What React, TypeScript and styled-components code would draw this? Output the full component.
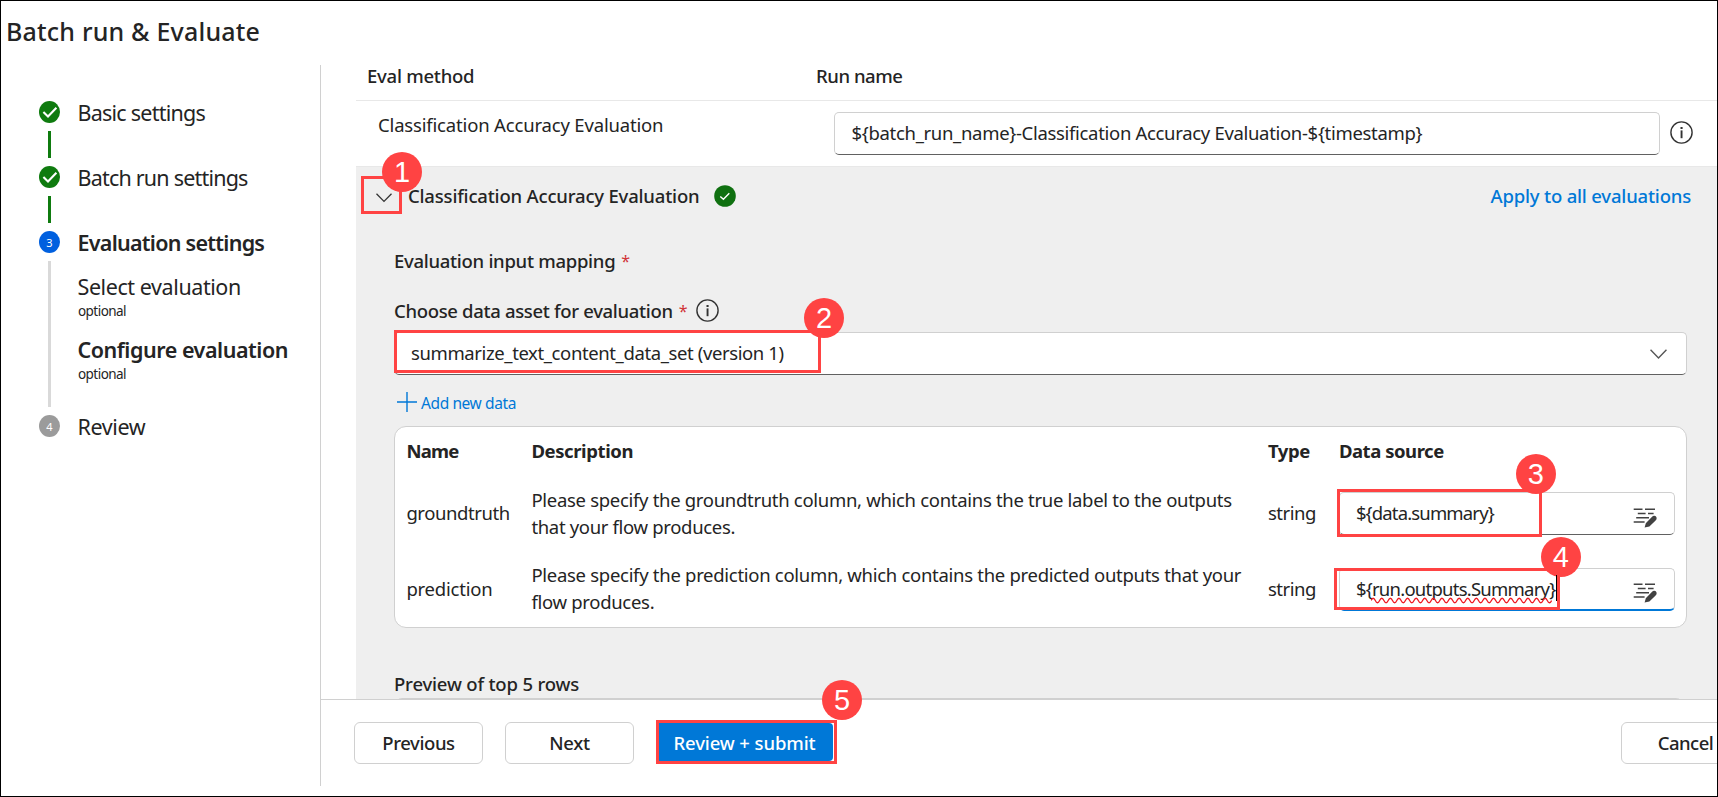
import React from "react";
import styled, { createGlobalStyle, css } from "styled-components";

const color = {
  ink: "#242424",
  blue: "#0078d7",
  green: "#0f7b0f",
  red: "#ff4343",
  line: "#d0d0d0",
  faint: "#e8e8e8",
  panel: "#efefef",
};

const GlobalStyle = createGlobalStyle`
  * { box-sizing: border-box; }
  body {
    margin: 0;
    background: #fff;
    color: ${color.ink};
    font-family: "Noto Sans", "Open Sans", sans-serif;
  }
`;

type TextProps = { $track?: number };

const BodyText = styled.div<TextProps>`
  font-size: 18.5px;
  line-height: 28px;
  white-space: nowrap;
  letter-spacing: ${(p) => p.$track ?? -0.3}px;
`;

const MediumText = styled(BodyText)`
  font-weight: 500;
`;

const BoldText = styled(BodyText)`
  font-weight: 700;
`;

/* ---------- frame ---------- */

const Frame = styled.div`
  width: 1718px;
  height: 797px;
  border: 1px solid #000;
  background: #fff;
  overflow: hidden;
  display: flex;
  flex-direction: column;
`;

const Title = styled.h1<TextProps>`
  margin: 0;
  height: 64px;
  padding: 12px 0 0 5px;
  font-size: 25px;
  font-weight: 500;
  line-height: 36px;
  letter-spacing: ${(p) => p.$track}px;
`;

const Columns = styled.div`
  height: 721px;
  display: flex;
`;

/* ---------- step list ---------- */

const Sidebar = styled.nav`
  width: 319px;
  flex: none;
  padding: 36px 0 0 38px;
  display: flex;
  flex-direction: column;
`;

const Step = styled.div<{ $height: number }>`
  height: ${(p) => p.$height}px;
  display: grid;
  grid-template-columns: 21px 1fr;
  column-gap: 17px;
`;

const Rail = styled.div`
  display: flex;
  flex-direction: column;
  align-items: center;
`;

const StepDot = styled.div<{ $color: string }>`
  width: 21px;
  height: 22px;
  flex: none;
  border-radius: 50%;
  background: ${(p) => p.$color};
  color: #fff;
  font-size: 11px;
  line-height: 24px;
  text-align: center;
`;

const Connector = styled.div<{ $color: string }>`
  width: 3px;
  flex: 1;
  margin: 8px 0;
  background: ${(p) => p.$color};
`;

const StepLabels = styled.div`
  display: flex;
  flex-direction: column;
  padding-left: 0.5px;
`;

const StepLabel = styled.div<TextProps & { $active?: boolean; $gap?: number }>`
  margin-top: ${(p) => p.$gap ?? -1}px;
  font-size: 21.5px;
  line-height: 26px;
  font-weight: ${(p) => (p.$active ? 600 : 400)};
  letter-spacing: ${(p) => p.$track}px;
  white-space: nowrap;
`;

const StepNote = styled.div`
  padding: 1px 0 0 0.5px;
  font-size: 13.5px;
  line-height: 20px;
  letter-spacing: -0.55px;
`;

/* ---------- main area ---------- */

const Main = styled.main`
  flex: 1;
  min-width: 0;
  border-left: 1px solid ${color.line};
  display: flex;
  flex-direction: column;
`;

const ScrollArea = styled.section`
  height: 642px;
  flex: none;
  overflow: hidden;
  margin-top: -8px;
  padding: 8px 0 0 35px;
`;

const methodColumns = css`
  display: grid;
  grid-template-columns: 442px 1fr;
`;

const MethodHead = styled.div`
  ${methodColumns}
  height: 36px;
  border-bottom: 1px solid ${color.faint};
`;

const HeadCell = styled(MediumText)<{ $inset: number }>`
  padding-left: ${(p) => p.$inset}px;
  line-height: 22px;
`;

const MethodRow = styled.div`
  ${methodColumns}
  height: 65px;
`;

const MethodName = styled(BodyText)`
  padding: 10px 0 0 22px;
`;

const RunName = styled.div`
  display: flex;
  align-items: flex-start;
  padding: 11px 0 0 36px;
`;

const RunInfo = styled.span`
  margin: 9px 0 0 10px;
  line-height: 0;
`;

const Field = styled.div<{ $width: number; $inset: number; $focused?: boolean }>`
  position: relative;
  width: ${(p) => p.$width}px;
  height: 43px;
  flex: none;
  padding: 0 0 0 ${(p) => p.$inset}px;
  border: 1px solid ${color.line};
  border-bottom: ${(p) => (p.$focused ? `2px solid ${color.blue}` : "1px solid #616161")};
  border-radius: 5px;
  background: #fff;
  display: flex;
  align-items: flex-start;
  justify-content: space-between;
`;

const FieldText = styled(BodyText)<{ $top: number }>`
  position: relative;
  margin-top: ${(p) => p.$top}px;
`;

const FieldIcon = styled.span<{ $top: number; $right: number }>`
  margin: ${(p) => p.$top}px ${(p) => p.$right}px 0 0;
  line-height: 0;
`;

const Panel = styled.section`
  height: 534px;
  border-top: 1px solid ${color.faint};
  background: ${color.panel};
`;

const PanelHead = styled.header`
  height: 80px;
  padding: 15px 26px 0 20px;
  display: flex;
  align-items: flex-start;
`;

const Toggle = styled.span`
  margin: 11px 16px 0 0;
  line-height: 0;
`;

const Valid = styled.span`
  margin: 3px 0 0 15px;
  line-height: 0;
`;

const ApplyLink = styled(MediumText)`
  margin-left: auto;
  color: ${color.blue};
`;

const PanelBody = styled.div`
  width: 1293px;
  margin-left: 38px;
  display: flex;
  flex-direction: column;
`;

const FieldLabel = styled.div<{ $height: number }>`
  height: ${(p) => p.$height}px;
  display: flex;
  align-items: flex-start;
`;

const Star = styled.span`
  margin-left: 6px;
  color: #d13438;
  font-size: 16px;
  line-height: 28px;
`;

const LabelInfo = styled.span`
  margin: 2px 0 0 8px;
  line-height: 0;
`;

const AddData = styled.div`
  height: 51px;
  padding: 17px 0 0 3px;
  display: flex;
  align-items: flex-start;
  gap: 4px;
  color: ${color.blue};
`;

const AddDataText = styled.span<TextProps>`
  font-size: 15.5px;
  line-height: 22px;
  letter-spacing: ${(p) => p.$track}px;
`;

const Card = styled.div`
  height: 202px;
  border: 1px solid ${color.line};
  border-radius: 12px;
  background: #fff;
`;

const inputColumns = css`
  display: grid;
  grid-template-columns: 125px 736.5px 71px 1fr;
  padding-left: 11.4px;
`;

const CardHead = styled.div`
  ${inputColumns}
  height: 48px;
  padding-top: 10px;
`;

const InputRow = styled.div<{ $height: number }>`
  ${inputColumns}
  height: ${(p) => p.$height}px;
  align-items: center;
`;

const Cell = styled(BodyText)`
  padding-bottom: 2px;
`;

const Description = styled.div<{ $lift?: number }>`
  padding-bottom: ${(p) => p.$lift ?? 2}px;
`;

const DescriptionLine = styled(BodyText)`
  line-height: 27px;
`;

const PreviewTitle = styled(MediumText)`
  margin-top: 42px;
`;

const PreviewTable = styled.div`
  width: 1290px;
  height: 20px;
  flex: none;
  border: 1px solid ${color.line};
  border-radius: 8px;
  background: #fff;
`;

/* ---------- footer ---------- */

const Footer = styled.footer`
  flex: 1;
  border-top: 1px solid ${color.line};
  padding: 20px 0 0 33px;
  display: flex;
  align-items: flex-start;
`;

const Button = styled.button<{ $width: number; $gap?: number; $end?: boolean } & TextProps>`
  width: ${(p) => p.$width}px;
  height: 42px;
  flex: none;
  margin: 2px ${(p) => (p.$end ? "-33px" : "0")} 0 ${(p) => (p.$end ? "auto" : `${p.$gap ?? 0}px`)};
  padding: 0;
  border: 1px solid ${color.line};
  border-radius: 6px;
  background: #fff;
  color: ${color.ink};
  font: 500 18.5px/28px "Noto Sans", sans-serif;
  letter-spacing: ${(p) => p.$track}px;
`;

const SubmitBox = styled.div`
  position: relative;
  width: 181px;
  height: 44px;
  margin-left: 22px;
  border: 3px solid ${color.red};
`;

const SubmitButton = styled.button<TextProps>`
  width: 174px;
  height: 38px;
  padding: 1px 3px 0 0;
  display: block;
  border: 0;
  border-radius: 0 4px 4px 0;
  background: ${color.blue};
  color: #fff;
  font: 500 18.5px/28px "Noto Sans", sans-serif;
  letter-spacing: ${(p) => p.$track}px;
`;

/* ---------- callouts drawn over the form ---------- */

const Anchor = styled.div`
  position: relative;
  width: 0;
  height: 0;
`;

const Highlight = styled.div<{ $x: number; $y: number; $w: number; $h: number }>`
  position: absolute;
  z-index: 2;
  left: ${(p) => p.$x}px;
  top: ${(p) => p.$y}px;
  width: ${(p) => p.$w}px;
  height: ${(p) => p.$h}px;
  border: 3px solid ${color.red};
`;

const Badge = styled.div<{ $x: number; $y: number }>`
  position: absolute;
  z-index: 3;
  left: ${(p) => p.$x - 20}px;
  top: ${(p) => p.$y - 20}px;
  width: 40px;
  height: 40px;
  border-radius: 50%;
  background: ${color.red};
  color: #fff;
  font: 29px/41px "Liberation Sans", sans-serif;
  text-align: center;
`;

const Squiggle = styled.svg`
  position: absolute;
  left: 15px;
  top: 22px;
`;

const Caret = styled.div`
  position: absolute;
  z-index: 3;
  right: -1px;
  top: 0;
  width: 1px;
  height: 26px;
  background: #000;
`;

/* ---------- icons ---------- */

const StepCheck = () => (
  <svg width="21" height="22" viewBox="0 0 21 22">
    <ellipse cx="10.5" cy="11" rx="10.5" ry="11" fill={color.green} />
    <path d="M4.4 11 L9 15.4 L17.4 6.8" fill="none" stroke="#fff" strokeWidth="2.1" />
  </svg>
);

const ValidIcon = () => (
  <svg width="22" height="22" viewBox="0 0 22 22">
    <circle cx="11" cy="11" r="10.8" fill="#0f7010" />
    <path d="M6.3 11.4 L9.4 14.3 L15.3 8.2" fill="none" stroke="#fff" strokeWidth="1.4" />
  </svg>
);

const InfoIcon = () => (
  <svg width="23" height="23" viewBox="0 0 23 23">
    <circle cx="11.5" cy="11.5" r="10.6" fill="none" stroke="#333" strokeWidth="1.4" />
    <rect x="10.6" y="9.4" width="1.9" height="7.8" fill="#333" />
    <rect x="10.5" y="6" width="2.1" height="2" fill="#333" />
  </svg>
);

const Chevron = ({ width = 16, tone = "#333" }: { width?: number; tone?: string }) => (
  <svg width={width} height={width * 0.6} viewBox="0 0 16 9.6">
    <path d="M0.5 0.8 L8 8.4 L15.5 0.8" fill="none" stroke={tone} strokeWidth="1.3" />
  </svg>
);

const PlusIcon = () => (
  <svg width="20" height="20" viewBox="0 0 20 20">
    <path d="M10 0 V20 M0 10 H20" stroke={color.blue} strokeWidth="1.4" />
  </svg>
);

const EditLinesIcon = () => (
  <svg width="24" height="20" viewBox="0 0 24 20">
    <path
      d="M0.7 1.3 H9.5 M12 1.3 H22 M4.8 5.5 H12.6 M15 5.5 H20.6 M3.2 9.8 H16 M0.7 14 H11.6"
      stroke="#424242"
      strokeWidth="1.4"
    />
    <path d="M11.6 19.4 L12.8 15.2 L18.6 9.2 Q20.7 7 22.8 8.2 Q24.6 10.2 22.6 12.6 L16.4 18.4 Z" fill="#424242" />
  </svg>
);

const waves = Array.from({ length: 21 }, () => "q2.15 -4.5 4.3 0 t4.3 0").join(" ");

const SpellingMark = () => (
  <Squiggle width="181" height="7" viewBox="0 0 181 7">
    <path d={`M0 3.5 ${waves}`} fill="none" stroke="#f01820" strokeWidth="1.3" />
  </Squiggle>
);

/* ---------- page ---------- */

export default function App() {
  return (
    <>
      <GlobalStyle />
      <Frame>
        <Title $track={0.2}>Batch run &amp; Evaluate</Title>
        <Columns>
          <Sidebar>
            <Step $height={65}>
              <Rail>
                <StepCheck />
                <Connector $color={color.green} />
              </Rail>
              <StepLabels>
                <StepLabel $track={-0.76}>Basic settings</StepLabel>
              </StepLabels>
            </Step>
            <Step $height={65}>
              <Rail>
                <StepCheck />
                <Connector $color={color.green} />
              </Rail>
              <StepLabels>
                <StepLabel $track={-0.79}>Batch run settings</StepLabel>
              </StepLabels>
            </Step>
            <Step $height={184}>
              <Rail>
                <StepDot $color="#0060df">3</StepDot>
                <Connector $color="#d9d9d9" />
              </Rail>
              <StepLabels>
                <StepLabel $active $track={-0.73}>Evaluation settings</StepLabel>
                <StepLabel $gap={18} $track={-0.42}>Select evaluation</StepLabel>
                <StepNote>optional</StepNote>
                <StepLabel $gap={16} $active $track={-0.46}>Configure evaluation</StepLabel>
                <StepNote>optional</StepNote>
              </StepLabels>
            </Step>
            <Step $height={22}>
              <Rail>
                <StepDot $color="#9b9b9b">4</StepDot>
              </Rail>
              <StepLabels>
                <StepLabel $track={-0.4}>Review</StepLabel>
              </StepLabels>
            </Step>
          </Sidebar>

          <Main>
            <ScrollArea>
              <MethodHead>
                <HeadCell $inset={11} $track={-0.25}>Eval method</HeadCell>
                <HeadCell $inset={18} $track={-0.44}>Run name</HeadCell>
              </MethodHead>
              <MethodRow>
                <MethodName $track={-0.17}>Classification Accuracy Evaluation</MethodName>
                <RunName>
                  <Field $width={826} $inset={16.5}>
                    <FieldText $top={6} $track={-0.317}>
                      {"${batch_run_name}-Classification Accuracy Evaluation-${timestamp}"}
                    </FieldText>
                  </Field>
                  <RunInfo>
                    <InfoIcon />
                  </RunInfo>
                </RunName>
              </MethodRow>

              <Panel>
                <Anchor>
                  <Highlight $x={5} $y={9} $w={41} $h={38} />
                  <Badge $x={46} $y={5}>1</Badge>
                </Anchor>
                <PanelHead>
                  <Toggle>
                    <Chevron />
                  </Toggle>
                  <MediumText $track={-0.186}>Classification Accuracy Evaluation</MediumText>
                  <Valid>
                    <ValidIcon />
                  </Valid>
                  <ApplyLink $track={-0.185}>Apply to all evaluations</ApplyLink>
                </PanelHead>

                <PanelBody>
                  <FieldLabel $height={50}>
                    <MediumText $track={-0.29}>Evaluation input mapping</MediumText>
                    <Star>*</Star>
                  </FieldLabel>
                  <FieldLabel $height={35}>
                    <MediumText $track={-0.33}>Choose data asset for evaluation</MediumText>
                    <Star>*</Star>
                    <LabelInfo>
                      <InfoIcon />
                    </LabelInfo>
                  </FieldLabel>
                  <Anchor>
                    <Highlight $x={0} $y={-2} $w={427} $h={43} />
                    <Badge $x={430} $y={-14}>2</Badge>
                  </Anchor>
                  <Field $width={1293} $inset={16}>
                    <FieldText $top={6} $track={-0.39}>
                      summarize_text_content_data_set (version 1)
                    </FieldText>
                    <FieldIcon $top={16} $right={19}>
                      <Chevron width={17} tone="#555" />
                    </FieldIcon>
                  </Field>
                  <AddData>
                    <PlusIcon />
                    <AddDataText $track={-0.4}>Add new data</AddDataText>
                  </AddData>

                  <Card>
                    <CardHead>
                      <BoldText $track={-0.8}>Name</BoldText>
                      <BoldText $track={-0.4}>Description</BoldText>
                      <BoldText $track={-0.4}>Type</BoldText>
                      <BoldText $track={-0.46}>Data source</BoldText>
                    </CardHead>
                    <InputRow $height={77}>
                      <Cell $track={-0.42}>groundtruth</Cell>
                      <Description>
                        <DescriptionLine $track={-0.305}>
                          Please specify the groundtruth column, which contains the true label to the outputs
                        </DescriptionLine>
                        <DescriptionLine $track={-0.33}>that your flow produces.</DescriptionLine>
                      </Description>
                      <Cell $track={-0.45}>string</Cell>
                      <Field $width={336} $inset={16}>
                        <Highlight $x={-3} $y={-4} $w={205} $h={48} />
                        <Badge $x={196} $y={-19}>3</Badge>
                        <FieldText $top={6} $track={-0.85}>{"${data.summary}"}</FieldText>
                        <FieldIcon $top={15} $right={17}>
                          <EditLinesIcon />
                        </FieldIcon>
                      </Field>
                    </InputRow>
                    <InputRow $height={75}>
                      <Cell $track={-0.22}>prediction</Cell>
                      <Description $lift={3}>
                        <DescriptionLine $track={-0.29}>
                          Please specify the prediction column, which contains the predicted outputs that your
                        </DescriptionLine>
                        <DescriptionLine $track={-0.3}>flow produces.</DescriptionLine>
                      </Description>
                      <Cell $track={-0.45}>string</Cell>
                      <Field $width={336} $inset={16} $focused>
                        <Highlight $x={-6} $y={-1} $w={226} $h={42} />
                        <Badge $x={221} $y={-12}>4</Badge>
                        <FieldText $top={6} $track={-0.76}>
                          {"${run.outputs.Summary}"}
                          <SpellingMark />
                          <Caret />
                        </FieldText>
                        <FieldIcon $top={14} $right={17}>
                          <EditLinesIcon />
                        </FieldIcon>
                      </Field>
                    </InputRow>
                  </Card>

                  <PreviewTitle $track={-0.18}>Preview of top 5 rows</PreviewTitle>
                  <PreviewTable />
                </PanelBody>
              </Panel>
            </ScrollArea>

            <Footer>
              <Button $width={129} $track={-0.4}>Previous</Button>
              <Button $width={129} $gap={22} $track={-0.3}>Next</Button>
              <SubmitBox>
                <SubmitButton $track={-0.11}>Review + submit</SubmitButton>
                <Badge $x={183} $y={-23}>5</Badge>
              </SubmitBox>
              <Button $width={129} $end $track={-0.5}>Cancel</Button>
            </Footer>
          </Main>
        </Columns>
      </Frame>
    </>
  );
}
